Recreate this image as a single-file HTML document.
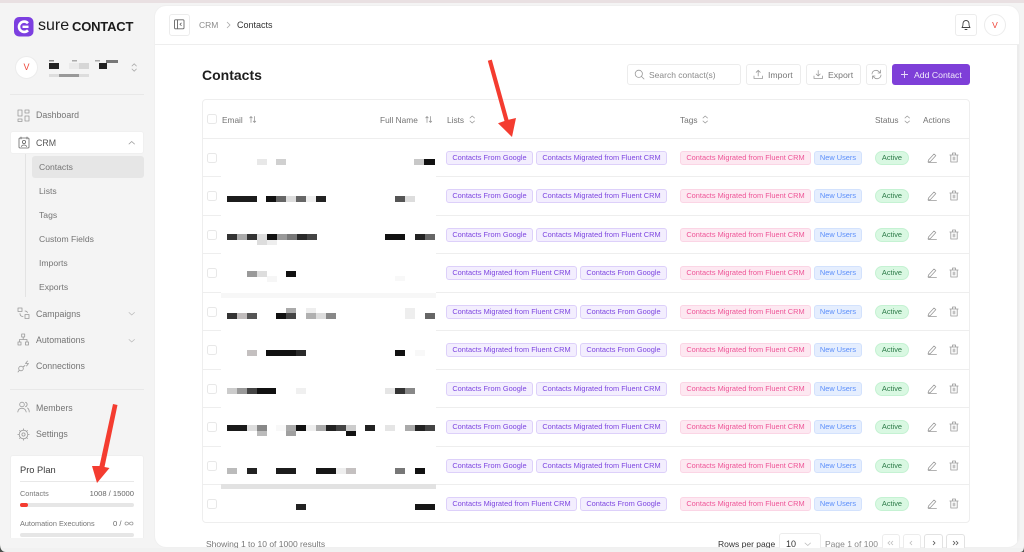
<!DOCTYPE html>
<html><head><meta charset="utf-8"><style>
*{box-sizing:border-box;margin:0;padding:0}
html,body{width:1024px;height:552px;overflow:hidden;background:#f4f4f4;font-family:"Liberation Sans",sans-serif;color:#555}
body{position:relative;filter:blur(.3px)}
.a{position:absolute;white-space:nowrap}
.t{position:absolute;white-space:nowrap;line-height:12px;margin-top:-6px}
.nav{font-size:8.8px;color:#747474}
.box{position:absolute;background:#fff;border:1px solid #ececec;border-radius:3px}
.th{font-size:8.3px;color:#737373}
.r{position:absolute;left:0;width:1024px;height:0}
.r svg{margin-top:-1px}
.b{position:absolute;top:-7px;height:14px;line-height:12px;font-size:7.4px;text-align:center;border-radius:3px;border:1px solid;white-space:nowrap}
.v{background:#f3eefe;border-color:#ddd0fa;color:#7d45e0}
.p{background:#fde8f1;border-color:#fbd5e5;color:#ee5597}
.n{background:#e5eefe;border-color:#d3e2fd;color:#5c8ffa}
.g{background:#d9f8e2;border-color:#c5f2d3;color:#2c7a48;border-radius:7px}
.c{position:absolute;left:207px;top:-5px;width:10px;height:10px;border:1px solid #e8e8e8;border-radius:2.5px;background:#fff}
.l{position:absolute;left:202px;width:768px;height:1px;background:#eeeeee}
svg{position:absolute;overflow:visible}
.i{fill:none;stroke:#999;stroke-width:.8;stroke-linecap:round;stroke-linejoin:round}
</style></head><body>
<div class="a" style="left:0;top:0;width:1024px;height:3px;background:#e9e0e2"></div>

<!-- sidebar -->
<svg style="left:14px;top:17px" width="20" height="20" viewBox="0 0 20 20"><rect width="19.5" height="19.5" rx="5" fill="#7c3fe0"/><path d="M14 6.200A5.200 5.200 0 1 0 14 13.300" fill="none" stroke="#fff" stroke-width="2.600"/><path d="M8.500 9.800h6" stroke="#fff" stroke-width="2.400"/></svg>
<div class="t" style="left:38px;top:26px;font-size:16px;color:#1c1c1c;line-height:14px;margin-top:-7px">sure</div>
<div class="t" style="left:72px;top:27px;font-size:13px;font-weight:bold;color:#1c1c1c;line-height:14px;margin-top:-7px;letter-spacing:-.2px">CONTACT</div>
<div class="a" style="left:15px;top:56px;width:23px;height:23px;border-radius:50%;background:#fff;border:1px solid #ececec;color:#ef4438;font-size:9px;text-align:center;line-height:21px">V</div>
<svg style="left:0;top:0" width="150" height="90"><rect x="49" y="63" width="10" height="6" fill="#222"/><rect x="69" y="63" width="10" height="6" fill="#eaeaea"/><rect x="79" y="63" width="10" height="6" fill="#d6d6d6"/><rect x="99" y="63" width="8" height="6" fill="#222"/><rect x="49" y="74" width="10" height="3" fill="#ddd"/><rect x="59" y="74" width="20" height="3" fill="#999"/><rect x="79" y="74" width="10" height="3" fill="#ddd"/><rect x="49" y="60" width="5" height="1.500" fill="#888"/><rect x="72" y="60" width="5" height="1.500" fill="#aaa"/><rect x="95" y="60" width="5" height="1.500" fill="#aaa"/><rect x="106" y="60" width="12" height="3" fill="#777"/><path class="i" d="M132 66l2.200-2.200 2.200 2.200M132 69l2.200 2.200 2.200-2.200" style="stroke:#aaa"/></svg>
<div class="a" style="left:10px;top:94px;width:134px;height:1px;background:#e8e8e8"></div>
<svg style="left:17px;top:109px" width="14" height="14" viewBox="0 0 14 14"><path class="i" d="M1 1h4v6H1zM8 1h4v3H8zM8 7h4v5H8zM1 10h4v2.500H1z"/></svg>
<div class="t nav" style="left:36px;top:115px">Dashboard</div>
<div class="box" style="left:10px;top:131px;width:134px;height:23px;border-color:#f0f0f0"></div>
<svg style="left:18px;top:136px" width="14" height="14" viewBox="0 0 14 14"><rect class="i" x="1" y="2" width="10" height="10" rx="1" style="stroke:#666"/><circle class="i" cx="6" cy="6" r="1.600" style="stroke:#666"/><path class="i" d="M3.500 10.500c.5-2 4.500-2 5 0M3 1v2M9 1v2" style="stroke:#666"/></svg>
<div class="t nav" style="left:36px;top:142.500px;color:#555">CRM</div>
<svg style="left:128px;top:140px" width="8" height="5"><path class="i" d="M1 4l2.700-2.500L6.500 4"/></svg>
<div class="a" style="left:25px;top:154px;width:1px;height:143px;background:#e3e3e3"></div>
<div class="a" style="left:32px;top:156px;width:112px;height:22px;background:#e6e6e6;border-radius:3px"></div>
<div class="t nav" style="left:39px;top:167px;font-size:8.600px">Contacts</div>
<div class="t nav" style="left:39px;top:191px;font-size:8.600px">Lists</div>
<div class="t nav" style="left:39px;top:215px;font-size:8.600px">Tags</div>
<div class="t nav" style="left:39px;top:239px;font-size:8.600px">Custom Fields</div>
<div class="t nav" style="left:39px;top:263px;font-size:8.600px">Imports</div>
<div class="t nav" style="left:39px;top:287px;font-size:8.600px">Exports</div>
<svg style="left:17px;top:307px" width="13" height="13" viewBox="0 0 13 13"><path class="i" d="M1 1h4v3.500H1zM8 7.500h4v4H8zM3 6.500c0 2 1 3 3 3M8 4c1 0 2 .5 2.500 1.500"/></svg>
<div class="t nav" style="left:36px;top:313.500px">Campaigns</div>
<svg style="left:128px;top:311px" width="8" height="5"><path class="i" d="M1 1.500L3.700 4 6.500 1.500" style="stroke:#bbb"/></svg>
<svg style="left:17px;top:333px" width="13" height="13" viewBox="0 0 13 13"><path class="i" d="M4.700 1h3v3h-3zM1 9h3v3H1zM8.500 9h3v3h-3zM6.200 4v2.500M2.500 9V6.500h7.500V9"/></svg>
<div class="t nav" style="left:36px;top:340px">Automations</div>
<svg style="left:128px;top:338px" width="8" height="5"><path class="i" d="M1 1.500L3.700 4 6.500 1.500" style="stroke:#bbb"/></svg>
<svg style="left:17px;top:360px" width="13" height="13" viewBox="0 0 13 13"><circle class="i" cx="4" cy="8.500" r="2.300"/><path class="i" d="M1 12l1.300-1.800M6 7l2-1.500M10.500 1L8.500 3.500h3L9.500 6"/></svg>
<div class="t nav" style="left:36px;top:366px">Connections</div>
<div class="a" style="left:10px;top:389px;width:134px;height:1px;background:#e8e8e8"></div>
<svg style="left:17px;top:401px" width="13" height="13" viewBox="0 0 13 13"><circle class="i" cx="5" cy="3.500" r="2.300"/><path class="i" d="M.8 11c0-5 8-5 8.400 0M8.500 1.300a2.300 2.300 0 0 1 0 4.400M10.500 7c1 .6 1.700 2 1.700 4"/></svg>
<div class="t nav" style="left:36px;top:407.500px">Members</div>
<svg style="left:17px;top:428px" width="13" height="13" viewBox="0 0 13 13"><circle class="i" cx="6.500" cy="6.500" r="4.300"/><circle class="i" cx="6.500" cy="6.500" r="1.600"/><path class="i" d="M6.500 .8v1.400M6.500 10.800v1.400M.8 6.500h1.400M10.800 6.500h1.400M2.500 2.500l1 1M9.500 9.500l1 1M2.500 10.500l1-1M9.500 3.500l1-1"/></svg>
<div class="t nav" style="left:36px;top:434px">Settings</div>
<div class="a" style="left:10px;top:455px;width:134px;height:83px;background:#fff;border:1px solid #efefef;border-bottom:0;border-radius:3px 3px 0 0"></div>
<div class="t" style="left:20px;top:469.500px;font-size:9.300px;color:#3c3c3c">Pro Plan</div>
<div class="a" style="left:20px;top:481px;width:114px;height:1px;background:#e8e8e8"></div>
<div class="t" style="left:20px;top:493.500px;font-size:7.300px;color:#777">Contacts</div>
<div class="t" style="right:890px;top:493.500px;font-size:7.600px;color:#666">1008 / 15000</div>
<div class="a" style="left:20px;top:503px;width:114px;height:4px;background:#e6e6e6;border-radius:2px"></div>
<div class="a" style="left:20px;top:503px;width:8px;height:4px;background:#f43c30;border-radius:2px"></div>
<div class="t" style="left:20px;top:523.500px;font-size:7.300px;color:#777">Automation Executions</div>
<div class="t" style="left:113px;top:523.500px;font-size:7.600px;color:#666">0 /</div>
<svg style="left:124px;top:521px" width="10" height="5"><path class="i" d="M5 2.500C3.500 .5 1 .5 1 2.500s2.500 2 4 0c1.500-2 4-2 4 0s-2.500 2-4 0z"/></svg>
<div class="a" style="left:20px;top:533px;width:114px;height:4px;background:#e6e6e6;border-radius:2px"></div>

<!-- main -->
<div class="a" style="left:154px;top:5px;width:866px;height:543px;background:#fff;border-radius:12px;border:1px solid #f0f0f0;overflow:hidden">
<div class="a" style="left:0;top:38px;width:866px;height:1px;background:#eeeeee"></div>
<div class="a" style="left:862px;top:39px;width:3px;height:503px;background:#ececec"></div>
</div>
<div class="box" style="left:169px;top:14px;width:21px;height:22px"></div>
<svg style="left:174px;top:19px" width="11" height="11" viewBox="0 0 11 11"><rect x=".5" y=".8" width="9.500" height="9" rx="1" fill="none" stroke="#666" stroke-width=".9"/><path d="M3.500 .8v9" stroke="#666" stroke-width=".9"/><path d="M7.500 3.800L6 5.300l1.500 1.500" fill="none" stroke="#666" stroke-width=".8"/></svg>
<div class="t" style="left:199px;top:25px;font-size:8.500px;color:#8c8c8c">CRM</div>
<svg style="left:226px;top:21px" width="6" height="8"><path d="M1 1l3 3-3 3" fill="none" stroke="#aaa" stroke-width=".8"/></svg>
<div class="t" style="left:237px;top:25px;font-size:9px;color:#333">Contacts</div>
<div class="box" style="left:955px;top:14px;width:22px;height:22px"></div>
<svg style="left:960px;top:19px" width="12" height="12" viewBox="0 0 12 12"><path d="M2 8.500c1-1 1-2 1-4a3 3 0 0 1 6 0c0 2 0 3 1 4zM5 10.500h2" fill="none" stroke="#444" stroke-width=".9" stroke-linejoin="round" stroke-linecap="round"/></svg>
<div class="a" style="left:984px;top:14px;width:22px;height:22px;border-radius:50%;background:#fff;border:1px solid #ececec;color:#ef4438;font-size:8.500px;text-align:center;line-height:20px">V</div>

<div class="t" style="left:202px;top:75px;font-size:14px;font-weight:bold;color:#1e1e1e;line-height:16px;margin-top:-8px">Contacts</div>
<div class="box" style="left:627px;top:64px;width:114px;height:21px"></div>
<svg style="left:634px;top:69px" width="11" height="11" viewBox="0 0 11 11"><circle class="i" cx="4.800" cy="4.800" r="3.600"/><path class="i" d="M7.500 7.500L10 10"/></svg>
<div class="t" style="left:649px;top:74.500px;font-size:8.500px;color:#8a8a8a">Search contact(s)</div>
<div class="box" style="left:746px;top:64px;width:55px;height:21px"></div>
<svg style="left:753px;top:69px" width="11" height="11" viewBox="0 0 11 11"><path class="i" d="M1 7v2.500h8.500V7M5.200 7V1.500M3.200 3.300l2-2 2 2"/></svg>
<div class="t" style="left:768px;top:74.500px;font-size:8.700px;color:#777">Import</div>
<div class="box" style="left:806px;top:64px;width:55px;height:21px"></div>
<svg style="left:813px;top:69px" width="11" height="11" viewBox="0 0 11 11"><path class="i" d="M1 7v2.500h8.500V7M5.200 1.500V7M3.200 5l2 2 2-2"/></svg>
<div class="t" style="left:828px;top:74.500px;font-size:8.700px;color:#777">Export</div>
<div class="box" style="left:866px;top:64px;width:21px;height:21px"></div>
<svg style="left:871px;top:69px" width="11" height="11" viewBox="0 0 11 11"><path class="i" d="M1 5a4 4 0 0 1 7-2.300L9.500 4M9.500 1.200V4H7M10 6a4 4 0 0 1-7 2.300L1.500 7M1.500 9.800V7H4"/></svg>
<div class="a" style="left:892px;top:64px;width:78px;height:21px;background:#7e3fd8;border-radius:3px"></div>
<svg style="left:900px;top:70px" width="9" height="9"><path d="M4.500 1v7M1 4.500h7" stroke="#e8dcfa" stroke-width=".9"/></svg>
<div class="t" style="left:914px;top:74.500px;font-size:8.700px;color:#f2ecfc">Add Contact</div>

<!-- table -->
<div class="a" style="left:202px;top:99px;width:768px;height:424px;border:1px solid #eeeeee;border-radius:4px;background:#fff"></div>
<div class="l" style="top:138px"></div>
<div class="l" style="top:176px"></div><div class="l" style="top:215px"></div><div class="l" style="top:253px"></div><div class="l" style="top:292px"></div><div class="l" style="top:330px"></div><div class="l" style="top:369px"></div><div class="l" style="top:407px"></div><div class="l" style="top:446px"></div><div class="l" style="top:484px"></div>
<div class="a" style="left:221px;top:139px;width:215px;height:383px;background:#fff"></div>
<div class="a" style="left:221px;top:293px;width:215px;height:5px;background:#f7f7f7"></div>
<div class="a" style="left:221px;top:484px;width:215px;height:5px;background:#e2e2e2"></div>

<div class="c" style="top:114px"></div>
<div class="t th" style="left:222px;top:119.500px">Email</div>
<svg style="left:249px;top:115px" width="8" height="9"><path class="i" d="M2 1.500v6M.8 2.800L2 1.500l1.200 1.300M5.500 7.500v-6M4.300 6.200l1.200 1.300 1.200-1.300" stroke-width=".6"/></svg>
<div class="t th" style="left:380px;top:119.500px">Full Name</div>
<svg style="left:425px;top:115px" width="8" height="9"><path class="i" d="M2 1.500v6M.8 2.800L2 1.500l1.200 1.300M5.500 7.500v-6M4.300 6.200l1.200 1.300 1.200-1.300" stroke-width=".6"/></svg>
<div class="t th" style="left:447px;top:119.500px">Lists</div>
<svg style="left:469px;top:115px" width="7" height="9"><path class="i" d="M1 3l2.200-2L5.500 3M1 6l2.200 2L5.500 6"/></svg>
<div class="t th" style="left:680px;top:119.500px">Tags</div>
<svg style="left:702px;top:115px" width="7" height="9"><path class="i" d="M1 3l2.200-2L5.500 3M1 6l2.200 2L5.500 6"/></svg>
<div class="t th" style="left:875px;top:119.500px">Status</div>
<svg style="left:904px;top:115px" width="7" height="9"><path class="i" d="M1 3l2.200-2L5.500 3M1 6l2.200 2L5.500 6"/></svg>
<div class="t th" style="left:923px;top:119.500px">Actions</div>

<!-- mosaic -->
<svg style="left:0;top:0" width="1024" height="552" shape-rendering="crispEdges">
<rect x="257" y="159" width="10" height="6" fill="#e8e8e8"/><rect x="276" y="159" width="10" height="6" fill="#d0d0d0"/><rect x="414" y="159" width="10" height="6" fill="#c8c8c8"/><rect x="424" y="159" width="11" height="6" fill="#111"/>
<rect x="227" y="196" width="30" height="6" fill="#1c1c1c"/><rect x="266" y="196" width="10" height="6" fill="#111"/><rect x="276" y="196" width="10" height="6" fill="#666"/><rect x="286" y="196" width="10" height="6" fill="#ddd"/><rect x="296" y="196" width="10" height="6" fill="#666"/><rect x="306" y="196" width="10" height="6" fill="#eee"/><rect x="316" y="196" width="10" height="6" fill="#222"/><rect x="395" y="196" width="10" height="6" fill="#555"/><rect x="405" y="196" width="10" height="6" fill="#ddd"/>
<rect x="227" y="234" width="10" height="6" fill="#333"/><rect x="237" y="234" width="10" height="6" fill="#aaa"/><rect x="247" y="234" width="10" height="6" fill="#333"/><rect x="257" y="234" width="10" height="11" fill="#ddd"/><rect x="267" y="240" width="10" height="5" fill="#eee"/><rect x="267" y="234" width="10" height="6" fill="#111"/><rect x="277" y="234" width="10" height="6" fill="#999"/><rect x="287" y="234" width="10" height="6" fill="#777"/><rect x="297" y="234" width="10" height="6" fill="#2a2a2a"/><rect x="307" y="234" width="10" height="6" fill="#444"/><rect x="385" y="234" width="20" height="6" fill="#111"/><rect x="415" y="234" width="10" height="6" fill="#222"/><rect x="425" y="234" width="10" height="6" fill="#666"/>
<rect x="247" y="271" width="10" height="6" fill="#999"/><rect x="257" y="271" width="10" height="6" fill="#ddd"/><rect x="267" y="276" width="10" height="6" fill="#f6f6f6"/><rect x="286" y="271" width="10" height="6" fill="#111"/><rect x="395" y="276" width="10" height="5" fill="#f8f8f8"/>
<rect x="227" y="313" width="10" height="6" fill="#333"/><rect x="237" y="313" width="10" height="6" fill="#c0bcbc"/><rect x="247" y="313" width="10" height="6" fill="#555"/><rect x="276" y="313" width="10" height="6" fill="#111"/><rect x="286" y="313" width="10" height="6" fill="#444"/><rect x="286" y="308" width="10" height="5" fill="#aaa"/><rect x="306" y="313" width="10" height="6" fill="#b0b0b0"/><rect x="306" y="308" width="10" height="5" fill="#eee"/><rect x="316" y="313" width="10" height="6" fill="#ddd"/><rect x="326" y="313" width="10" height="6" fill="#888"/><rect x="405" y="308" width="10" height="11" fill="#eee"/><rect x="425" y="313" width="10" height="6" fill="#666"/>
<rect x="247" y="350" width="10" height="6" fill="#c4c0c0"/><rect x="266" y="350" width="30" height="6" fill="#111"/><rect x="296" y="350" width="10" height="6" fill="#2a2a2a"/><rect x="395" y="350" width="10" height="6" fill="#111"/><rect x="415" y="350" width="10" height="6" fill="#f8f8f8"/>
<rect x="227" y="388" width="10" height="6" fill="#ccc"/><rect x="237" y="388" width="10" height="6" fill="#999"/><rect x="247" y="388" width="10" height="6" fill="#444"/><rect x="257" y="388" width="19" height="6" fill="#111"/><rect x="296" y="388" width="10" height="6" fill="#f0f0f0"/><rect x="385" y="388" width="10" height="6" fill="#e5e5e5"/><rect x="395" y="388" width="10" height="6" fill="#333"/><rect x="405" y="388" width="10" height="6" fill="#888"/>
<rect x="227" y="425" width="20" height="6" fill="#1a1a1a"/><rect x="247" y="425" width="10" height="6" fill="#ddd"/><rect x="257" y="425" width="10" height="6" fill="#888"/><rect x="257" y="431" width="10" height="5" fill="#bbb"/><rect x="276" y="425" width="10" height="6" fill="#f8f8f8"/><rect x="286" y="425" width="10" height="6" fill="#aaa"/><rect x="286" y="431" width="10" height="5" fill="#a0a0a0"/><rect x="296" y="425" width="10" height="6" fill="#111"/><rect x="306" y="425" width="10" height="6" fill="#eee"/><rect x="316" y="425" width="10" height="6" fill="#aaa"/><rect x="326" y="425" width="10" height="6" fill="#222"/><rect x="336" y="425" width="10" height="6" fill="#444"/><rect x="346" y="425" width="10" height="6" fill="#ccc"/><rect x="346" y="431" width="10" height="5" fill="#111"/><rect x="365" y="425" width="10" height="6" fill="#222"/><rect x="385" y="425" width="10" height="6" fill="#e5e5e5"/><rect x="405" y="425" width="10" height="6" fill="#aaa"/><rect x="415" y="425" width="10" height="6" fill="#222"/><rect x="425" y="425" width="10" height="6" fill="#444"/>
<rect x="227" y="468" width="10" height="6" fill="#bbb"/><rect x="247" y="468" width="10" height="6" fill="#222"/><rect x="276" y="468" width="20" height="6" fill="#1c1c1c"/><rect x="316" y="468" width="20" height="6" fill="#161616"/><rect x="336" y="468" width="10" height="6" fill="#eee"/><rect x="346" y="468" width="10" height="6" fill="#c4c0c0"/><rect x="395" y="468" width="10" height="6" fill="#777"/><rect x="415" y="468" width="10" height="6" fill="#111"/>
<rect x="296" y="504" width="10" height="6" fill="#222"/><rect x="415" y="504" width="20" height="6" fill="#161616"/>
</svg>

<!-- rows -->
<div class="r" style="top:157.500px"><div class="c"></div><div class="b v" style="left:446px;width:87px">Contacts From Google</div><div class="b v" style="left:536px;width:131px">Contacts Migrated from Fluent CRM</div><div class="b p" style="left:680px;width:131px">Contacts Migrated from Fluent CRM</div><div class="b n" style="left:814px;width:48px">New Users</div><div class="b g" style="left:875px;width:34px">Active</div><svg style="left:927px;top:-5px" width="11" height="11" viewBox="0 0 11 11"><path class="i" d="M1.500 8l5.500-6 1.800 1.600-5.500 6-2.200.4zM1.500 10.500h8"/></svg><svg style="left:949px;top:-5px" width="10" height="11" viewBox="0 0 10 11"><path class="i" d="M1.800 3v7h6.400V3zM.8 3h8.400M3.500 3V1h3v2M4.200 5v3M5.800 5v3"/></svg></div>
<div class="r" style="top:196px"><div class="c"></div><div class="b v" style="left:446px;width:87px">Contacts From Google</div><div class="b v" style="left:536px;width:131px">Contacts Migrated from Fluent CRM</div><div class="b p" style="left:680px;width:131px">Contacts Migrated from Fluent CRM</div><div class="b n" style="left:814px;width:48px">New Users</div><div class="b g" style="left:875px;width:34px">Active</div><svg style="left:927px;top:-5px" width="11" height="11" viewBox="0 0 11 11"><path class="i" d="M1.500 8l5.500-6 1.800 1.600-5.500 6-2.200.4zM1.500 10.500h8"/></svg><svg style="left:949px;top:-5px" width="10" height="11" viewBox="0 0 10 11"><path class="i" d="M1.800 3v7h6.400V3zM.8 3h8.400M3.500 3V1h3v2M4.200 5v3M5.800 5v3"/></svg></div>
<div class="r" style="top:234.500px"><div class="c"></div><div class="b v" style="left:446px;width:87px">Contacts From Google</div><div class="b v" style="left:536px;width:131px">Contacts Migrated from Fluent CRM</div><div class="b p" style="left:680px;width:131px">Contacts Migrated from Fluent CRM</div><div class="b n" style="left:814px;width:48px">New Users</div><div class="b g" style="left:875px;width:34px">Active</div><svg style="left:927px;top:-5px" width="11" height="11" viewBox="0 0 11 11"><path class="i" d="M1.500 8l5.500-6 1.800 1.600-5.500 6-2.200.4zM1.500 10.500h8"/></svg><svg style="left:949px;top:-5px" width="10" height="11" viewBox="0 0 10 11"><path class="i" d="M1.800 3v7h6.400V3zM.8 3h8.400M3.500 3V1h3v2M4.200 5v3M5.800 5v3"/></svg></div>
<div class="r" style="top:273px"><div class="c"></div><div class="b v" style="left:446px;width:131px">Contacts Migrated from Fluent CRM</div><div class="b v" style="left:580px;width:87px">Contacts From Google</div><div class="b p" style="left:680px;width:131px">Contacts Migrated from Fluent CRM</div><div class="b n" style="left:814px;width:48px">New Users</div><div class="b g" style="left:875px;width:34px">Active</div><svg style="left:927px;top:-5px" width="11" height="11" viewBox="0 0 11 11"><path class="i" d="M1.500 8l5.500-6 1.800 1.600-5.500 6-2.200.4zM1.500 10.500h8"/></svg><svg style="left:949px;top:-5px" width="10" height="11" viewBox="0 0 10 11"><path class="i" d="M1.800 3v7h6.400V3zM.8 3h8.400M3.500 3V1h3v2M4.200 5v3M5.800 5v3"/></svg></div>
<div class="r" style="top:311.500px"><div class="c"></div><div class="b v" style="left:446px;width:131px">Contacts Migrated from Fluent CRM</div><div class="b v" style="left:580px;width:87px">Contacts From Google</div><div class="b p" style="left:680px;width:131px">Contacts Migrated from Fluent CRM</div><div class="b n" style="left:814px;width:48px">New Users</div><div class="b g" style="left:875px;width:34px">Active</div><svg style="left:927px;top:-5px" width="11" height="11" viewBox="0 0 11 11"><path class="i" d="M1.500 8l5.500-6 1.800 1.600-5.500 6-2.200.4zM1.500 10.500h8"/></svg><svg style="left:949px;top:-5px" width="10" height="11" viewBox="0 0 10 11"><path class="i" d="M1.800 3v7h6.400V3zM.8 3h8.400M3.500 3V1h3v2M4.200 5v3M5.800 5v3"/></svg></div>
<div class="r" style="top:350px"><div class="c"></div><div class="b v" style="left:446px;width:131px">Contacts Migrated from Fluent CRM</div><div class="b v" style="left:580px;width:87px">Contacts From Google</div><div class="b p" style="left:680px;width:131px">Contacts Migrated from Fluent CRM</div><div class="b n" style="left:814px;width:48px">New Users</div><div class="b g" style="left:875px;width:34px">Active</div><svg style="left:927px;top:-5px" width="11" height="11" viewBox="0 0 11 11"><path class="i" d="M1.500 8l5.500-6 1.800 1.600-5.500 6-2.200.4zM1.500 10.500h8"/></svg><svg style="left:949px;top:-5px" width="10" height="11" viewBox="0 0 10 11"><path class="i" d="M1.800 3v7h6.400V3zM.8 3h8.400M3.500 3V1h3v2M4.200 5v3M5.800 5v3"/></svg></div>
<div class="r" style="top:388.500px"><div class="c"></div><div class="b v" style="left:446px;width:87px">Contacts From Google</div><div class="b v" style="left:536px;width:131px">Contacts Migrated from Fluent CRM</div><div class="b p" style="left:680px;width:131px">Contacts Migrated from Fluent CRM</div><div class="b n" style="left:814px;width:48px">New Users</div><div class="b g" style="left:875px;width:34px">Active</div><svg style="left:927px;top:-5px" width="11" height="11" viewBox="0 0 11 11"><path class="i" d="M1.500 8l5.500-6 1.800 1.600-5.500 6-2.200.4zM1.500 10.500h8"/></svg><svg style="left:949px;top:-5px" width="10" height="11" viewBox="0 0 10 11"><path class="i" d="M1.800 3v7h6.400V3zM.8 3h8.400M3.500 3V1h3v2M4.200 5v3M5.800 5v3"/></svg></div>
<div class="r" style="top:427px"><div class="c"></div><div class="b v" style="left:446px;width:87px">Contacts From Google</div><div class="b v" style="left:536px;width:131px">Contacts Migrated from Fluent CRM</div><div class="b p" style="left:680px;width:131px">Contacts Migrated from Fluent CRM</div><div class="b n" style="left:814px;width:48px">New Users</div><div class="b g" style="left:875px;width:34px">Active</div><svg style="left:927px;top:-5px" width="11" height="11" viewBox="0 0 11 11"><path class="i" d="M1.500 8l5.500-6 1.800 1.600-5.500 6-2.200.4zM1.500 10.500h8"/></svg><svg style="left:949px;top:-5px" width="10" height="11" viewBox="0 0 10 11"><path class="i" d="M1.800 3v7h6.400V3zM.8 3h8.400M3.500 3V1h3v2M4.200 5v3M5.800 5v3"/></svg></div>
<div class="r" style="top:465.500px"><div class="c"></div><div class="b v" style="left:446px;width:87px">Contacts From Google</div><div class="b v" style="left:536px;width:131px">Contacts Migrated from Fluent CRM</div><div class="b p" style="left:680px;width:131px">Contacts Migrated from Fluent CRM</div><div class="b n" style="left:814px;width:48px">New Users</div><div class="b g" style="left:875px;width:34px">Active</div><svg style="left:927px;top:-5px" width="11" height="11" viewBox="0 0 11 11"><path class="i" d="M1.500 8l5.500-6 1.800 1.600-5.500 6-2.200.4zM1.500 10.500h8"/></svg><svg style="left:949px;top:-5px" width="10" height="11" viewBox="0 0 10 11"><path class="i" d="M1.800 3v7h6.400V3zM.8 3h8.400M3.500 3V1h3v2M4.200 5v3M5.800 5v3"/></svg></div>
<div class="r" style="top:504px"><div class="c"></div><div class="b v" style="left:446px;width:131px">Contacts Migrated from Fluent CRM</div><div class="b v" style="left:580px;width:87px">Contacts From Google</div><div class="b p" style="left:680px;width:131px">Contacts Migrated from Fluent CRM</div><div class="b n" style="left:814px;width:48px">New Users</div><div class="b g" style="left:875px;width:34px">Active</div><svg style="left:927px;top:-5px" width="11" height="11" viewBox="0 0 11 11"><path class="i" d="M1.500 8l5.500-6 1.800 1.600-5.500 6-2.200.4zM1.500 10.500h8"/></svg><svg style="left:949px;top:-5px" width="10" height="11" viewBox="0 0 10 11"><path class="i" d="M1.800 3v7h6.400V3zM.8 3h8.400M3.500 3V1h3v2M4.200 5v3M5.800 5v3"/></svg></div>

<!-- footer -->
<div class="t" style="left:206px;top:544px;font-size:8.500px;color:#777">Showing 1 to 10 of 1000 results</div>
<div class="t" style="left:718px;top:544px;font-size:8.500px;color:#333">Rows per page</div>
<div class="box" style="left:779px;top:533px;width:42px;height:18px"></div>
<div class="t" style="left:786px;top:544px;font-size:9px;color:#333">10</div>
<svg style="left:804px;top:542px" width="8" height="5"><path class="i" d="M1 1l2.800 2.500L6.500 1" style="stroke:#bbb"/></svg>
<div class="t" style="left:825px;top:544px;font-size:8.500px;color:#888">Page 1 of 100</div>
<div class="box" style="left:882px;top:534px;width:18px;height:17px"></div>
<div class="box" style="left:903px;top:534px;width:18px;height:17px"></div>
<div class="box" style="left:924px;top:534px;width:19px;height:17px;border-color:#e2e2e2"></div>
<div class="box" style="left:946px;top:534px;width:19px;height:17px;border-color:#e2e2e2"></div>
<svg style="left:0;top:0" width="1024" height="552"><path d="M890 541l-2 2 2 2M893 541l-2 2 2 2M912 541l-2 2 2 2" fill="none" stroke="#bbb" stroke-width=".8"/><path d="M933 541l2 2-2 2M953 541l2 2-2 2M956 541l2 2-2 2" fill="none" stroke="#555" stroke-width=".8"/></svg>

<!-- bottom strip -->
<div class="a" style="left:0;top:548px;width:1024px;height:4px;background:#f1f1f1"></div>
<svg style="left:0;top:0" width="1024" height="552"><path d="M0 544c0 5 2 8 6 8H0zM1024 546c0 4-1 6-4 6h4z" fill="#4a4f4c"/></svg>

<!-- arrows -->
<svg style="left:0;top:0" width="1024" height="552"><path d="M487.800 60.800L491.800 59.600L508.500 119.800L516 118L512 137L498 123.200L504.500 121z" fill="#f43c30"/><path d="M113 404L117.500 405L104.500 467L109.500 468L97 483L92 466L99.500 466z" fill="#f43c30"/></svg>
</body></html>
